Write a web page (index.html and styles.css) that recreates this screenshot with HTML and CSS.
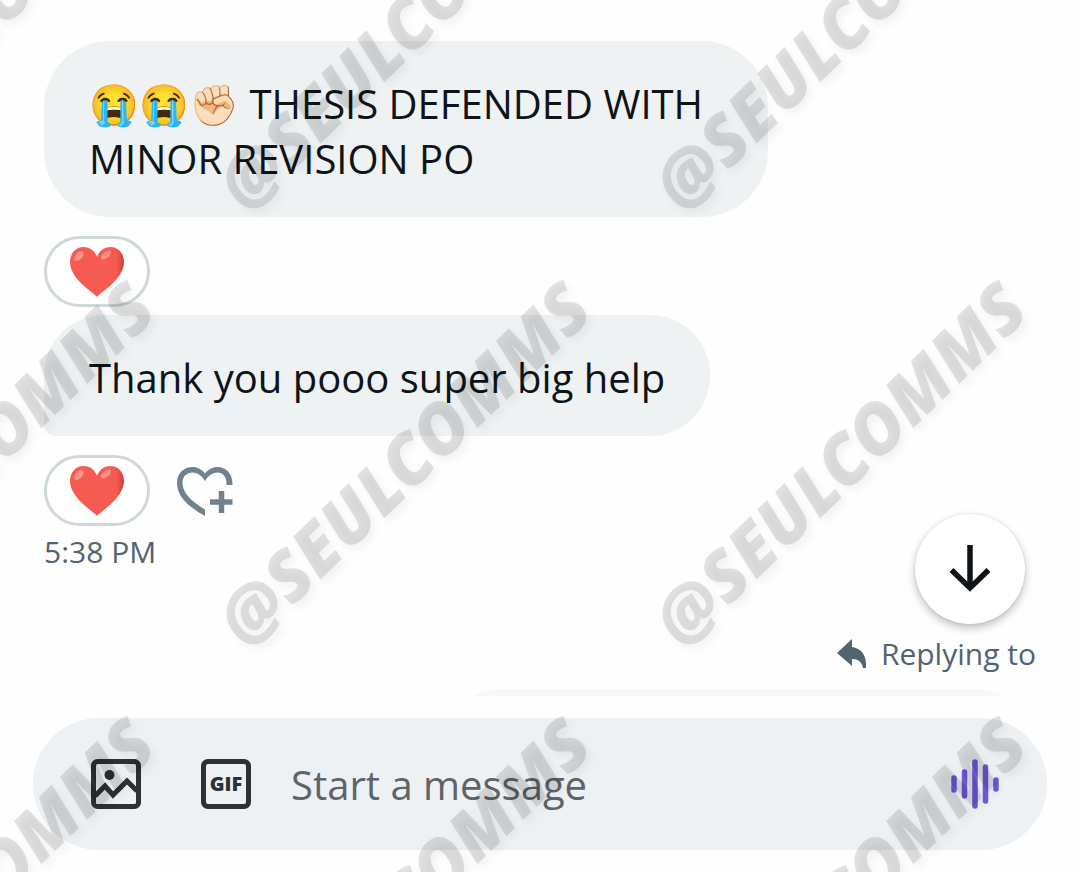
FILE: index.html
```
<!DOCTYPE html>
<html lang="en">
<head>
    <meta charset="UTF-8">
    <meta name="viewport" content="width=device-width, initial-scale=1.0">
    <title>Messages</title>
    <link rel="stylesheet" href="styles.css">
</head>
<body>
    <svg class="defs" aria-hidden="true">
        <defs>
            <linearGradient id="heartFill" x1="0" y1="0" x2="1" y2="0">
                <stop offset="0.85" stop-color="#f55b51"/>
                <stop offset="1" stop-color="#c9443f"/>
            </linearGradient>
            <symbol id="heart" viewBox="0 0 56 52">
                <path fill="url(#heartFill)" d="M28 51C24 46 1 33 1 16C1 7 7 1 14.500 1C21 1 26 5 28 11C30 5 35 1 41.500 1C49 1 55 7 55 16C55 33 32 46 28 51Z"/>
                <ellipse cx="10" cy="10" rx="6" ry="3.500" fill="#ff9086" transform="rotate(-48 10 10)"/>
                <ellipse cx="37" cy="9" rx="6" ry="3" fill="#ff9086" transform="rotate(-40 37 9)"/>
            </symbol>
        </defs>
    </svg>

    <main class="chat">
        <p class="bubble">😭😭✊🏻 THESIS DEFENDED WITH MINOR REVISION PO</p>
        <div class="reactions">
            <button class="reaction" aria-label="Heart reaction"><svg><use href="#heart"/></svg></button>
        </div>

        <p class="bubble last">Thank you pooo super big help</p>
        <div class="reactions">
            <button class="reaction" aria-label="Heart reaction"><svg><use href="#heart"/></svg></button>
            <button class="add-reaction" aria-label="Add reaction">
                <svg viewBox="0 0 56 50">
                    <path fill="#71828f" d="M28 50C14 42 0 32 0 17C0 7 7 1 15.500 1C20.500 1 25 3.500 28 7.500C31 3.500 35.500 1 40.500 1C49 1 56 8 55.500 19H49.500C50 11 46 6.500 40.500 6.500C35.500 6.500 31 10 28 15C25 10 20.500 6.500 15.500 6.500C10 6.500 5.500 10 5.500 17C5.500 27 15 36 28 43.500Z"/>
                    <path fill="none" stroke="#71828f" stroke-width="5.500" d="M44.500 25V47M33 36H55.500"/>
                </svg>
            </button>
        </div>
        <time class="time">5:38 PM</time>

        <div class="reply">
            <svg viewBox="0 0 30 30" fill="#536471"><path d="M0 14L15 0V8C24 9 30 16 29 29H26C25 23 21 20 15 20V27Z"/></svg>
            <span>Replying to</span>
        </div>
        <div class="quoted"></div>

        <button class="scroll-down" aria-label="Scroll to latest">
            <svg viewBox="0 0 42 50" fill="none" stroke="#0f1419" stroke-width="5.500"><path d="M21 1V44M2.500 26L21 44L39.500 26"/></svg>
        </button>
    </main>

    <form class="composer">
        <button type="button" class="tool" aria-label="Add photo">
            <svg viewBox="0 0 50 50">
                <rect x="2.500" y="2.500" width="45" height="45" rx="4" fill="none" stroke="#2c3135" stroke-width="5"/>
                <circle cx="18.500" cy="16" r="5" fill="#2c3135"/>
                <path d="M4 37L14 27L22 36L36 22L46 32" fill="none" stroke="#2c3135" stroke-width="5"/>
            </svg>
        </button>
        <button type="button" class="tool gif">GIF</button>
        <input type="text" class="message" placeholder="Start a message" aria-label="Start a message">
        <button type="button" class="tool" aria-label="Record voice message">
            <svg viewBox="0 0 50 50" stroke="#7357dc" stroke-width="5.500" stroke-linecap="round">
                <path d="M4 19V31M14.500 13V37M25 3V47M35.500 8V42M46 21V30"/>
            </svg>
        </button>
    </form>

    <!-- repeated handle printed over the chat -->
    <div class="watermark" aria-hidden="true">
        <span>@SEULCOMMS</span><span>@SEULCOMMS</span><span>@SEULCOMMS</span>
        <span>@SEULCOMMS</span><span>@SEULCOMMS</span><span>@SEULCOMMS</span>
        <span>@SEULCOMMS</span><span>@SEULCOMMS</span><span>@SEULCOMMS</span>
    </div>
</body>
</html>
```
FILE: styles.css
```
* {
    box-sizing: border-box;
}
body {
    position: relative;
    display: flex;
    flex-direction: column;
    height: 100vh;
    margin: 0;
    overflow: hidden;
    background-color: #fefefe;
    color: #0f1419;
    font-family: "Open Sans", "Noto Sans", sans-serif;
}
button {
    padding: 0;
    border: none;
    background: none;
    cursor: pointer;
}
svg {
    display: block;
}
.defs {
    position: absolute;
    width: 0;
    height: 0;
}
.chat {
    position: relative;
    flex: 1;
    min-height: 0;
    display: flex;
    flex-direction: column;
    align-items: flex-start;
    padding: 41px 44px 0;
    overflow: hidden;
}
.bubble {
    flex-shrink: 0;
    max-width: 73%;
    margin: 0;
    padding: 35px 45px 31px;
    border-radius: 66px;
    background-color: #eef2f3;
    font-size: 40px;
    line-height: 55px;
}
.bubble.last {
    border-radius: 60px 60px 60px 12px;
}
.reactions {
    display: flex;
    align-items: center;
    gap: 27px;
    padding: 19px 0 8px;
}
.reaction {
    display: flex;
    align-items: center;
    justify-content: center;
    width: 106px;
    height: 71px;
    border: 3px solid #cfd9dc;
    border-radius: 36px;
    background-color: #fff;
}
.reaction svg {
    width: 56px;
    height: 52px;
}
.add-reaction svg {
    width: 56px;
    height: 50px;
}
.time {
    color: #536471;
    font-size: 30px;
    line-height: 36px;
}
.reply {
    display: flex;
    align-items: center;
    align-self: flex-end;
    gap: 14px;
    margin-top: 65px;
    color: #536471;
    font-size: 30px;
    line-height: 38px;
}
.reply svg {
    width: 30px;
    height: 30px;
}
.quoted {
    flex-shrink: 0;
    align-self: flex-end;
    width: 60%;
    height: 120px;
    margin-top: 16px;
    border-radius: 66px;
    background-color: #f7f9f9;
}
.scroll-down {
    position: absolute;
    right: 55px;
    bottom: 72px;
    display: flex;
    align-items: center;
    justify-content: center;
    width: 110px;
    height: 110px;
    border-radius: 50%;
    background-color: #fff;
    box-shadow: 0 4px 8px rgba(0, 0, 0, 0.25), 0 0 2px rgba(0, 0, 0, 0.12);
}
.scroll-down svg {
    width: 42px;
    height: 50px;
}
.composer {
    display: flex;
    align-items: center;
    gap: 60px;
    height: 132px;
    margin: 22px 33px;
    padding: 0 47px 0 58px;
    border-radius: 66px;
    background-color: #edf1f4;
}
.tool {
    flex-shrink: 0;
    width: 50px;
    height: 50px;
}
.gif {
    border: 5px solid #2c3135;
    border-radius: 7px;
    color: #2c3135;
    font-family: "Open Sans", sans-serif;
    font-size: 20px;
    font-weight: 800;
    line-height: 40px;
}
.message {
    flex: 1;
    min-width: 0;
    margin-left: -20px;
    padding: 0;
    border: none;
    outline: none;
    background: none;
    color: #0f1419;
    font-family: "Open Sans", "Noto Sans", sans-serif;
    font-size: 40px;
}
.message::placeholder {
    color: #5f6468;
    opacity: 1;
}
.watermark {
    position: absolute;
    inset: 0;
    display: grid;
    grid-template-columns: repeat(3, 436px);
    grid-auto-rows: 436px;
    place-items: center;
    margin: -191px 0 0 -252px;
    pointer-events: none;
}
.watermark span {
    color: rgba(0, 0, 0, 0.11);
    font-family: "Noto Sans", sans-serif;
    font-size: 70px;
    font-style: italic;
    font-weight: 900;
    text-shadow: 0 6px 8px rgba(0, 0, 0, 0.05);
    transform: rotate(-44deg);
}
```
